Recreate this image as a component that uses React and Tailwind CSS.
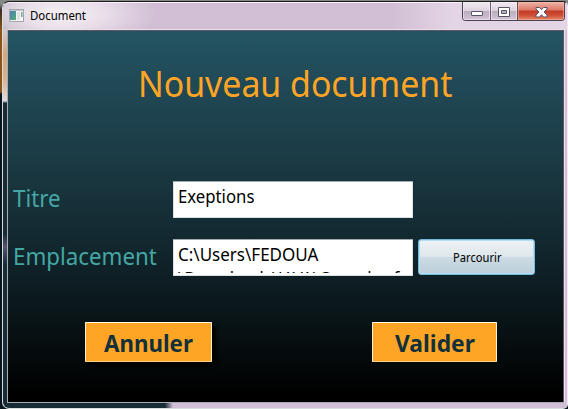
import React from "react";

// Text whose glyphs are scaled sideways to a narrower, humanist set width.
function Label({ children, className = "scale-x-[0.93]" }) {
  return <span className={"block w-max origin-left whitespace-pre leading-none " + className}>{children}</span>;
}

function TitleBar() {
  return (
    <header className="flex h-[27px] shrink-0 items-start pl-[6px]">
      <svg className="mt-[7px] shrink-0" width="15" height="13" viewBox="0 0 15 13">
        <defs>
          <linearGradient id="pane" x1="0" y1="0" x2="1" y2="1">
            <stop offset="0" stopColor="#4a82b8" />
            <stop offset="1" stopColor="#58aa72" />
          </linearGradient>
        </defs>
        <rect x=".5" y=".5" width="14" height="12" fill="#f4f4f5" stroke="#a6a5ad" />
        <rect x="1" y="1" width="13" height="1" fill="#c5c4ca" />
        <rect x="1" y="2" width="6" height="9" fill="url(#pane)" />
        <rect x="8" y="3" width="3" height="8" fill="#dde3e1" />
        <rect x="12" y="3" width="1.5" height="5" fill="#72ad8a" />
      </svg>
      <Label className="ml-[6px] mt-[8px] scale-x-[0.95] text-[12px] text-black">Document</Label>
      <div className="ml-auto mr-[2px] flex h-[19px] w-[103px] overflow-hidden rounded-b-[4px] border border-t-0 border-[#4d4452]">
        <div className="flex w-[28px] items-center justify-center border-r border-[#6b5f70] bg-[linear-gradient(#f1eaf2_0%,#ddd2df_48%,#b9adbf_50%,#d4c4d6_100%)] pt-[4px] shadow-[inset_0_0_0_1px_#f5eef699]">
          <svg width="12" height="12" viewBox="0 0 12 12"><rect x=".5" y="4.5" width="11" height="4" rx=".5" fill="#fff" stroke="#555565" /></svg>
        </div>
        <div className="flex w-[27px] items-center justify-center border-r border-[#6b4b54] bg-[linear-gradient(#f1eaf2_0%,#ddd2df_48%,#b9adbf_50%,#d4c4d6_100%)] pt-[2px] shadow-[inset_0_0_0_1px_#f5eef699]">
          <svg width="12" height="11" viewBox="0 0 12 11"><path fillRule="evenodd" d="M.5.5h11v9H.5zM3.5 3.5v3h5v-3z" fill="#fff" stroke="#555565" /></svg>
        </div>
        <div className="flex flex-1 items-center justify-center bg-[linear-gradient(#efb3a8_0%,#dc7767_45%,#c43924_50%,#cf5039_75%,#e58b68_100%)] pt-[2px] shadow-[inset_0_0_0_1px_#f5c0b080]">
          <svg width="13" height="11" viewBox="0 0 13 11"><path d="M1 .5h3.500l2 2.200L8.500.5H12v1.600L9 5l3 3.200v1.800H8.500l-2-2.200-2 2.200H1V8.200L4 5 1 2.100z" fill="#fff" stroke="#555565" /></svg>
        </div>
      </div>
    </header>
  );
}

function ActionButton({ className, children }) {
  return (
    <button className={"flex h-[40px] items-start rounded-[1px] border border-t-[#fff7e8] border-x-[#fff0d5] border-b-[#ffd184] bg-[#ffa526] font-bold text-[#12303a] " + className}>
      {children}
    </button>
  );
}

export default function App() {
  return (
    <div className="flex h-[409px] w-[568px] overflow-hidden bg-[linear-gradient(#858985_0px,#858985_4px,#3a2c20_10px,#8a551b_30px,#8a551b_92px,#07161e_94px)] pt-[1px] pl-[2px] font-['Noto_Sans','Open_Sans',sans-serif]">
      <main className="flex h-[408px] w-[566px] flex-col rounded-[7px] rounded-r-[5px] border border-t-[#20191f] border-r-[#f3eaf3] border-b-[#d8dede] border-l-[#d9dde2] bg-[linear-gradient(90deg,#182c38_0,#182c38_162px,#d2bfd5_170px)] bg-[length:100%_100%]">
        <div className="flex h-full flex-col rounded-[6px] bg-[radial-gradient(95px_32px_at_58px_12px,#f5f0f4_0%,#efe7efcc_45%,#d2bfd500_100%),linear-gradient(90deg,#b3adbb_0,#d2bfd5_45px,#d2bfd5_390px,#e3d5e5_450px)] bg-[length:100%_28px] bg-no-repeat shadow-[inset_0_1px_0_#f8f3f8]">
          <TitleBar />
          <div className="flex h-[374px] bg-[linear-gradient(#d8c8d2_0px,#d6a77c_25px,#d8b28e_50px,#e2dcdd_72px,#182c38_74px,#182c38_205px,#55566b_218px,#182c38_235px)] bg-[length:5px_100%] bg-no-repeat pl-[4px]">
            <section className="flex w-[558px] shrink-0 flex-col border border-t-[#e9dfe9] border-r-[#eee3ee] border-b-[#a5aeb0] border-l-[#a5adb2] bg-[linear-gradient(#245463_0%,#1b3a44_35%,#11252c_60%,#081215_80%,#000_98%)] shadow-[inset_0_1px_0_#5c5665,inset_-1px_0_0_#5d5260]">
              <h1 className="h-[151px] pl-[130px] pt-[36px] text-[36px] text-[#ffa526]"><Label className="scale-x-[0.94]">Nouveau document</Label></h1>
              <div className="flex h-[58px] items-start pl-[5px]">
                <Label className="mt-[5px] scale-x-[0.93] text-[24px] text-[#44a7a4]">Titre</Label>
                <div className="ml-auto mr-[151px] h-[37px] w-[240px] rounded-[1px] border border-[#dce0e3] border-t-[#a0aab0] bg-white pl-[4px] pt-[5px] text-[18px] text-black"><Label>Exeptions</Label></div>
              </div>
              <div className="flex h-[83px] items-start pl-[5px]">
                <Label className="mt-[5px] w-[159px] scale-x-[0.93] text-[24px] text-[#44a7a4]">Emplacement</Label>
                <div className="ml-auto h-[37px] w-[240px] overflow-hidden rounded-[1px] border border-[#dce0e3] border-t-[#a0aab0] bg-white pl-[4px] pt-[5px] text-[18px] text-black">
                  <div className="h-[28px] overflow-hidden"><Label className="scale-x-[0.945]">C:\Users\FEDOUA</Label><Label className="mt-[6px] scale-x-[0.93]">\Downloads\JAVA\Cour des f</Label></div>
                </div>
                <button className="ml-[5px] mr-[29px] flex h-[36px] w-[117px] items-start rounded-[3px] border border-[#75b9dc] bg-[linear-gradient(#edf2f5_0%,#dfe8ed_48%,#ccdbe4_51%,#bccfda_100%)] pl-[34px] pt-[12px] text-[12px] text-black shadow-[inset_0_0_0_1px_#b3dff3]"><Label>Parcourir</Label></button>
              </div>
              <div className="flex pl-[77px]">
                <ActionButton className="w-[127px] pl-[18px] pt-[8px] text-[24px] shadow-[4px_4px_4px_#000]"><Label>Annuler</Label></ActionButton>
                <ActionButton className="ml-[160px] w-[125px] pl-[22px] pt-[8px] text-[24px]"><Label className="scale-x-[0.95]">Valider</Label></ActionButton>
              </div>
            </section>
          </div>
        </div>
      </main>
    </div>
  );
}
